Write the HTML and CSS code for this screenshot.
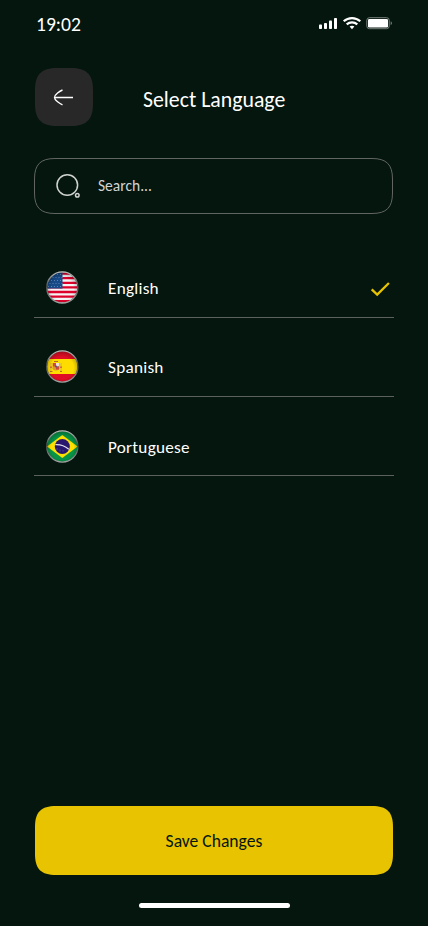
FILE: index.html
```html
<!DOCTYPE html>
<html lang="en">
<head>
<meta charset="utf-8">
<meta name="viewport" content="width=device-width, initial-scale=1">
<title>Select Language</title>
<link rel="stylesheet" href="styles.css">
</head>
<body>
<main class="screen">
  <div class="status">
    <span class="time">19:02</span>
    <svg class="indicators" width="76" height="16" viewBox="0 0 76 16">
      <g fill="#fff">
        <rect x="1" y="8.5" width="3" height="4.5" rx=".8"/>
        <rect x="6" y="7" width="3" height="6" rx=".8"/>
        <rect x="11" y="4.5" width="3" height="8.5" rx=".8"/>
        <rect x="16" y="2" width="3" height="11" rx=".8"/>
        <path d="M34 9.7c-1 0-1.8.3-2.4.9l2.4 2.7 2.4-2.7c-.6-.6-1.4-.9-2.4-.9z"/>
      </g>
      <path d="M25.7 5.3a12.3 12.3 0 0 1 16.6 0M28.7 8.3a8.1 8.1 0 0 1 10.6 0" fill="none" stroke="#fff" stroke-width="2.2"/>
      <rect x="48.8" y="1.7" width="22.4" height="11" rx="2.6" fill="none" stroke="#78807c"/>
      <rect x="50" y="3" width="20" height="8.6" rx="1.3" fill="#fff"/>
      <path d="M72.7 5.3c1.7.7 1.7 3.2 0 3.9z" fill="#78807c"/>
    </svg>
  </div>

  <header class="top">
    <button class="back" aria-label="Back">
      <svg width="58" height="58" viewBox="0 0 58 58">
        <path d="M22 0H36C51.5 0 58 6.500 58 22V36C58 51.500 51.500 58 36 58H22C6.500 58 0 51.500 0 36V22C0 6.500 6.500 0 22 0z" fill="#282828"/>
        <path d="M38 29.500H19.500M27.500 22c-2.500 1-8 4.700-8 7.500s5.500 6.300 8 7.300" fill="none" stroke="#fff" stroke-width="1.400"/>
      </svg>
    </button>
    <h1 class="title">Select Language</h1>
  </header>

  <label class="search">
    <svg class="shape" width="359" height="56" viewBox="0 0 359 56">
      <path d="M21 .5H338C352.500 .5 358.500 6.500 358.500 21V35C358.500 49.500 352.500 55.500 338 55.500H21C6.500 55.500 .5 49.500 .5 35V21C.5 6.500 6.500 .5 21 .5z" fill="none" stroke="#626663"/>
    </svg>
    <span class="field">
      <svg width="26" height="26" viewBox="0 0 26 26" fill="none" stroke="#d1d3d2" stroke-width="1.500">
        <circle cx="12.300" cy="12" r="10.300"/>
        <circle cx="22.300" cy="22.200" r="1.800"/>
      </svg>
      <span class="hint">Search...</span>
    </span>
  </label>

  <ul class="languages">
    <li class="row">
      <svg class="flag" width="34" height="34" viewBox="0 0 34 34">
        <defs>
          <clipPath id="disc"><circle cx="17.300" cy="17.500" r="15.200"/></clipPath>
          <linearGradient id="rim" x1="0" y1="0" x2="0" y2="1">
            <stop offset="0" stop-color="#b9bdba"/><stop offset=".45" stop-color="#4b504d"/><stop offset="1" stop-color="#a1a4a2"/>
          </linearGradient>
          <radialGradient id="shade" cx=".5" cy=".55" r=".5">
            <stop offset=".7" stop-color="#000" stop-opacity="0"/><stop offset="1" stop-color="#000" stop-opacity=".22"/>
          </radialGradient>
        </defs>
        <g clip-path="url(#disc)">
          <path fill="#f4f2f4" d="M0 0h34v34H0z"/>
          <path d="M0 3.700h34M0 8.200h34M0 12.800h34M0 17.400h34M0 22h34M0 26.600h34M0 31.200h34" stroke="#dc002b" stroke-width="2.300"/>
          <path fill="#164a89" d="M0 0h17.500v18.500H0z"/>
          <path d="M3 4.500h15M1.500 7.500h16M3 10.500h15M1.500 13.500h16M3 16.500h15" stroke="#5d84b0" stroke-width="1" stroke-dasharray="1 2"/>
          <circle cx="17.300" cy="17.500" r="16" fill="url(#shade)"/>
        </g>
        <circle cx="17.300" cy="17.500" r="15.600" fill="none" stroke="url(#rim)" stroke-width="1.300"/>
      </svg>
      <span class="name">English</span>
      <svg class="check" width="22" height="18" viewBox="0 0 22 18"><path d="M1.700 9.300 7.200 14.600 18.900 3" fill="none" stroke="#e7c302" stroke-width="2.300"/></svg>
    </li>
    <li class="row">
      <svg class="flag" width="34" height="34" viewBox="0 0 34 34">
        <g clip-path="url(#disc)">
          <path fill="#df0d25" d="M0 0h34v34H0z"/>
          <path fill="#ffdc00" d="M0 10h34v15H0z"/>
          <path fill="#d89a32" d="M7.500 14h7v6q-3.500 3-7 0z"/>
          <path fill="#d3473b" d="M8 14h3v3.500H8zM11 17.500h3v3h-3zM5 17.500h2v1.500H5zM15 17.500h2v1.500h-2z"/>
          <path fill="#eee2d2" d="M11 14h3v3h-3z"/>
          <path d="M6 14v8M16 14v8" stroke="#c4a35c" stroke-width=".8"/>
          <path d="M9 12.500h4M5 22.500h2.500M15 22.500h2" stroke="#b9682c"/>
          <circle cx="11" cy="17.500" r="1" fill="#4c568d"/>
          <circle cx="17.300" cy="17.500" r="16" fill="url(#shade)"/>
        </g>
        <circle cx="17.300" cy="17.500" r="15.600" fill="none" stroke="url(#rim)" stroke-width="1.300"/>
      </svg>
      <span class="name">Spanish</span>
    </li>
    <li class="row">
      <svg class="flag" width="34" height="34" viewBox="0 0 34 34">
        <g clip-path="url(#disc)">
          <path fill="#079447" d="M0 0h34v34H0z"/>
          <path fill="#fee000" d="M2 17.500 17.300 6 32.600 17.500 17.300 29z"/>
          <circle cx="17.300" cy="17.500" r="7.500" fill="#28166f"/>
          <path d="M10.300 15.700q7.500-.5 13.500 4.500" fill="none" stroke="#e1e0ed" stroke-width="1.200"/>
          <path d="M12 19v2M15 20.500v2M18 21v1.500" stroke="#5c5390" stroke-width=".8"/>
          <circle cx="17.300" cy="17.500" r="16" fill="url(#shade)"/>
        </g>
        <circle cx="17.300" cy="17.500" r="15.600" fill="none" stroke="url(#rim)" stroke-width="1.300"/>
      </svg>
      <span class="name">Portuguese</span>
    </li>
  </ul>

  <button class="save">
    <svg class="shape" width="358" height="69" viewBox="0 0 358 69">
      <path d="M21 0H337C352 0 358 6 358 21V48C358 63 352 69 337 69H21C6 69 0 63 0 48V21C0 6 6 0 21 0z" fill="#e7c302"/>
    </svg>
    <span class="save-text">Save Changes</span>
  </button>
  <div class="home-bar"></div>
</main>
</body>
</html>
```
FILE: styles.css
```css
* { box-sizing: border-box; margin: 0; padding: 0; }
body { background: #04160e; font-family: Carlito, Lato, sans-serif; color: #fff; }
svg { display: block; }
button { border: 0; background: none; font: inherit; color: inherit; }
.screen { width: 428px; height: 926px; display: flex; flex-direction: column; padding: 0 34px 18px 35px; overflow: hidden; }
.status { height: 68px; display: flex; justify-content: space-between; padding: 13px 0 0 1px; }
.time { font-size: 19.6px; line-height: 22px; }
.indicators { margin-top: 3px; }
.top { height: 58px; display: flex; align-items: center; }
.back { width: 58px; height: 58px; margin-right: 50px; }
.title { font-size: 21.8px; line-height: 26px; font-weight: 400; margin-top: 5px; white-space: nowrap; }
.search { display: grid; width: 359px; height: 56px; margin: 32px 0 0 -1px; }
.shape, .field, .save-text { grid-area: 1 / 1; }
.field { display: flex; align-items: center; gap: 17px; padding-left: 21px; }
.hint { font-size: 15.5px; line-height: 20px; margin-top: -1px; color: #d1d3d2; }
.languages { list-style: none; margin: 39px 0 0 -1px; }
.row { width: 360px; height: 79px; display: flex; align-items: flex-end; border-bottom: 1px solid #5c605e; padding: 0 2px 13px 11px; }
.row:first-child { height: 65px; }
.row:last-child { padding-bottom: 12px; }
.flag { flex: none; margin-right: 29px; }
.name { font-size: 17.2px; line-height: 22px; letter-spacing: .25px; margin-bottom: 4px; }
.check { margin: 0 0 6px auto; }
.save { display: grid; width: 358px; height: 69px; margin-top: auto; color: #04160e; }
.save-text { font-size: 17.6px; line-height: 22px; place-self: center; margin-top: 1px; }
.home-bar { width: 151px; height: 5px; border-radius: 3px; background: #fff; margin: 28px 0 0 104px; }
```
